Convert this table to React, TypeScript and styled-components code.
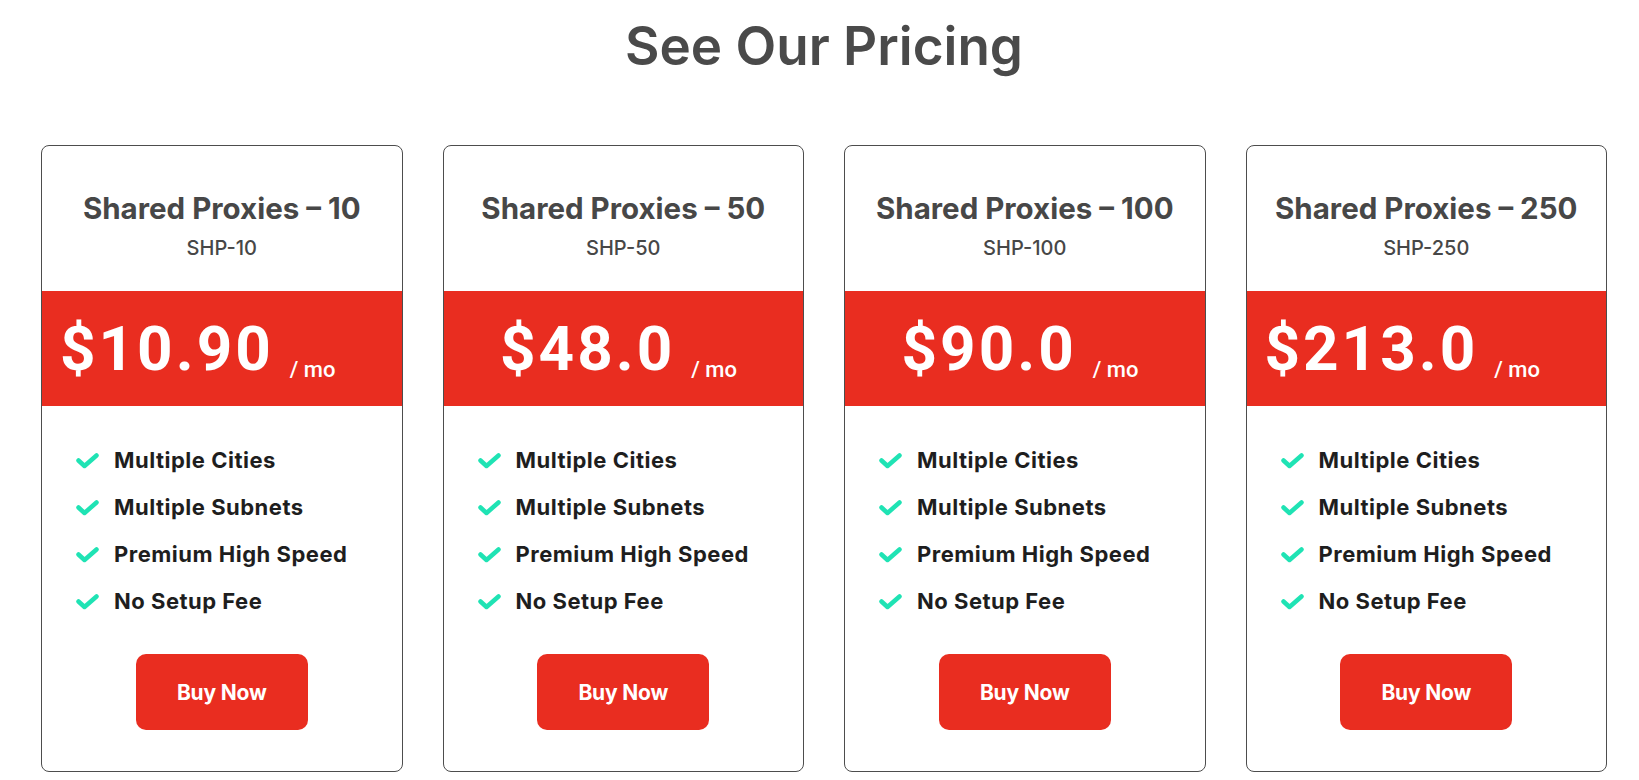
import styled, { createGlobalStyle } from "styled-components";

interface Plan {
  name: string;
  code: string;
  price: string;
}

const plans: Plan[] = [
  { name: "Shared Proxies – 10", code: "SHP-10", price: "$10.90" },
  { name: "Shared Proxies – 50", code: "SHP-50", price: "$48.0" },
  { name: "Shared Proxies – 100", code: "SHP-100", price: "$90.0" },
  { name: "Shared Proxies – 250", code: "SHP-250", price: "$213.0" },
];

const features = [
  "Multiple Cities",
  "Multiple Subnets",
  "Premium High Speed",
  "No Setup Fee",
];

const GlobalStyle = createGlobalStyle`
  * {
    box-sizing: border-box;
  }

  body {
    margin: 0;
    background: #ffffff;
    font-family: Inter, "Noto Sans", sans-serif;
  }
`;

const Section = styled.section`
  padding: 15px 32px 0 41px;
`;

const Heading = styled.h2`
  margin: 0 0 68px;
  font-size: 53px;
  line-height: 62px;
  font-weight: 600;
  color: #4a4a4a;
  text-align: center;
`;

const Grid = styled.div`
  display: grid;
  grid-template-columns: repeat(4, 1fr);
  gap: 40px;
`;

const Card = styled.article`
  display: flex;
  flex-direction: column;
  border: 1px solid #4d4d4d;
  border-radius: 8px;
  overflow: hidden;
  background: #ffffff;
  padding: 45px 0 41px;
`;

const Title = styled.h3`
  margin: 0;
  font-size: 29.5px;
  line-height: 35px;
  font-weight: 700;
  color: #474747;
  text-align: center;
`;

const Code = styled.div`
  margin-top: 10px;
  font-size: 20px;
  line-height: 24px;
  font-weight: 500;
  color: #474747;
  text-align: center;
`;

const PriceBand = styled.div`
  margin-top: 31px;
  height: 115px;
  display: flex;
  align-items: center;
  justify-content: flex-end;
  padding-right: 66px;
  background: #e92d20;
  color: #ffffff;
  white-space: nowrap;
`;

const Amount = styled.span`
  font-family: Roboto, "Liberation Sans", sans-serif;
  font-size: 62px;
  line-height: 62px;
  font-weight: 700;
  letter-spacing: 3px;
`;

const Per = styled.span`
  margin-left: 16px;
  font-family: Roboto, "Liberation Sans", sans-serif;
  font-size: 22px;
  font-weight: 500;
  align-self: flex-end;
  margin-bottom: 24px;
`;

const FeatureList = styled.ul`
  list-style: none;
  margin: 0;
  padding: 42px 0 0 34px;
  display: flex;
  flex-direction: column;
  gap: 22px;
`;

const FeatureItem = styled.li`
  display: flex;
  align-items: center;
  gap: 15px;
  font-size: 22px;
  line-height: 25px;
  font-weight: 700;
  letter-spacing: 0.5px;
  color: #1e1e1e;
`;

const BuyButton = styled.button`
  align-self: center;
  margin-top: 40px;
  width: 172px;
  height: 76px;
  border: none;
  border-radius: 10px;
  background: #e92d20;
  color: #ffffff;
  font-family: Inter, "Noto Sans", sans-serif;
  font-size: 21px;
  font-weight: 700;
  letter-spacing: -0.2px;
  cursor: pointer;
`;

function Check() {
  return (
    <svg width="23" height="16" viewBox="0 0 23 16" fill="none">
      <polyline
        points="2.5,7.5 8.5,13 20.5,2.5"
        stroke="#1fe3b4"
        strokeWidth="4.5"
        strokeLinecap="round"
        strokeLinejoin="round"
      />
    </svg>
  );
}

export default function App() {
  return (
    <>
      <GlobalStyle />
      <Section>
        <Heading>See Our Pricing</Heading>
        <Grid>
          {plans.map((plan) => (
            <Card key={plan.code}>
              <Title>{plan.name}</Title>
              <Code>{plan.code}</Code>
              <PriceBand>
                <Amount>{plan.price}</Amount>
                <Per>/ mo</Per>
              </PriceBand>
              <FeatureList>
                {features.map((feature) => (
                  <FeatureItem key={feature}>
                    <Check />
                    {feature}
                  </FeatureItem>
                ))}
              </FeatureList>
              <BuyButton>Buy Now</BuyButton>
            </Card>
          ))}
        </Grid>
      </Section>
    </>
  );
}
